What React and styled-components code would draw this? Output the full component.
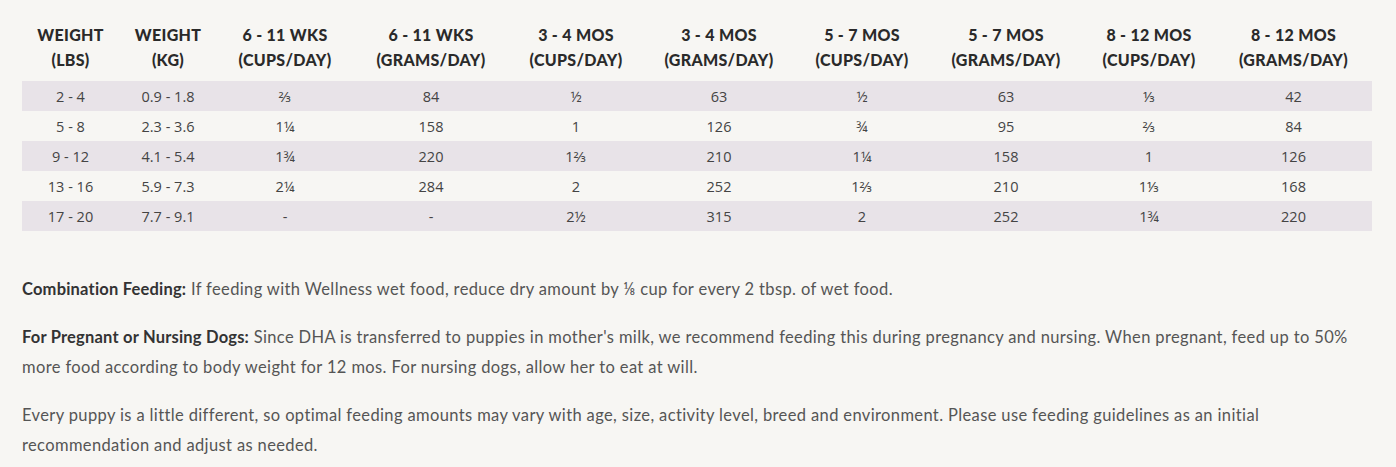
import React from "react";
import styled, { createGlobalStyle } from "styled-components";

const GlobalStyle = createGlobalStyle`
  html, body {
    margin: 0;
    padding: 0;
    background-color: #f7f6f3;
  }
  * {
    box-sizing: border-box;
  }
`;

const Page = styled.div`
  padding: 12px 24px 20px 22px;
  background-color: #f7f6f3;
  min-height: 467px;
`;

const Table = styled.table`
  width: 1350px;
  border-collapse: collapse;
  table-layout: fixed;
`;

const HeadCell = styled.th`
  padding: 10px 0 9px;
  font-family: "Lato", "Open Sans", sans-serif;
  font-weight: 900;
  font-size: 16px;
  line-height: 25px;
  letter-spacing: 0.3px;
  text-align: center;
  color: #2a2a2a;
`;

const Row = styled.tr`
  height: 30px;
  background-color: ${({ $striped }) => ($striped ? "#e8e3e8" : "transparent")};
`;

const Cell = styled.td`
  padding: 0;
  font-family: "Open Sans", "Noto Sans", sans-serif;
  font-size: 14.5px;
  text-align: center;
  color: #444;
`;

const Notes = styled.div`
  width: 1345px;
  margin-top: 43px;
  display: flex;
  flex-direction: column;
  gap: 18px;
`;

const Paragraph = styled.p`
  margin: 0;
  font-family: "Lato", "Noto Sans", sans-serif;
  font-size: 16.5px;
  line-height: 30px;
  color: #555;
  letter-spacing: 0.37px;
`;

const Label = styled.strong`
  font-weight: 700;
  color: #333;
  letter-spacing: 0.2px;
`;

const columns = [
  { width: 97, top: "WEIGHT", bottom: "(LBS)" },
  { width: 98, top: "WEIGHT", bottom: "(KG)" },
  { width: 136, top: "6 - 11 WKS", bottom: "(CUPS/DAY)" },
  { width: 156, top: "6 - 11 WKS", bottom: "(GRAMS/DAY)" },
  { width: 134, top: "3 - 4 MOS", bottom: "(CUPS/DAY)" },
  { width: 152, top: "3 - 4 MOS", bottom: "(GRAMS/DAY)" },
  { width: 134, top: "5 - 7 MOS", bottom: "(CUPS/DAY)" },
  { width: 154, top: "5 - 7 MOS", bottom: "(GRAMS/DAY)" },
  { width: 132, top: "8 - 12 MOS", bottom: "(CUPS/DAY)" },
  { width: 157, top: "8 - 12 MOS", bottom: "(GRAMS/DAY)" },
];

const rows = [
  ["2 - 4", "0.9 - 1.8", "⅔", "84", "½", "63", "½", "63", "⅓", "42"],
  ["5 - 8", "2.3 - 3.6", "1¼", "158", "1", "126", "¾", "95", "⅔", "84"],
  ["9 - 12", "4.1 - 5.4", "1¾", "220", "1⅔", "210", "1¼", "158", "1", "126"],
  ["13 - 16", "5.9 - 7.3", "2¼", "284", "2", "252", "1⅔", "210", "1⅓", "168"],
  ["17 - 20", "7.7 - 9.1", "-", "-", "2½", "315", "2", "252", "1¾", "220"],
];

export default function App() {
  return (
    <>
      <GlobalStyle />
      <Page>
        <Table>
          <colgroup>
            {columns.map((col, i) => (
              <col key={i} style={{ width: col.width }} />
            ))}
          </colgroup>
          <thead>
            <tr>
              {columns.map((col, i) => (
                <HeadCell key={i}>
                  {col.top}
                  <br />
                  {col.bottom}
                </HeadCell>
              ))}
            </tr>
          </thead>
          <tbody>
            {rows.map((row, i) => (
              <Row key={i} $striped={i % 2 === 0}>
                {row.map((value, j) => (
                  <Cell key={j}>{value}</Cell>
                ))}
              </Row>
            ))}
          </tbody>
        </Table>

        <Notes>
          <Paragraph>
            <Label>Combination Feeding:</Label> If feeding with Wellness wet
            food, reduce dry amount by ⅛ cup for every 2 tbsp. of wet food.
          </Paragraph>
          <Paragraph>
            <Label>For Pregnant or Nursing Dogs:</Label> Since DHA is
            transferred to puppies in mother's milk, we recommend feeding this
            during pregnancy and nursing. When pregnant, feed up to 50% more
            food according to body weight for 12 mos. For nursing dogs, allow
            her to eat at will.
          </Paragraph>
          <Paragraph>
            Every puppy is a little different, so optimal feeding amounts may
            vary with age, size, activity level, breed and environment. Please
            use feeding guidelines as an initial recommendation and adjust as
            needed.
          </Paragraph>
        </Notes>
      </Page>
    </>
  );
}
